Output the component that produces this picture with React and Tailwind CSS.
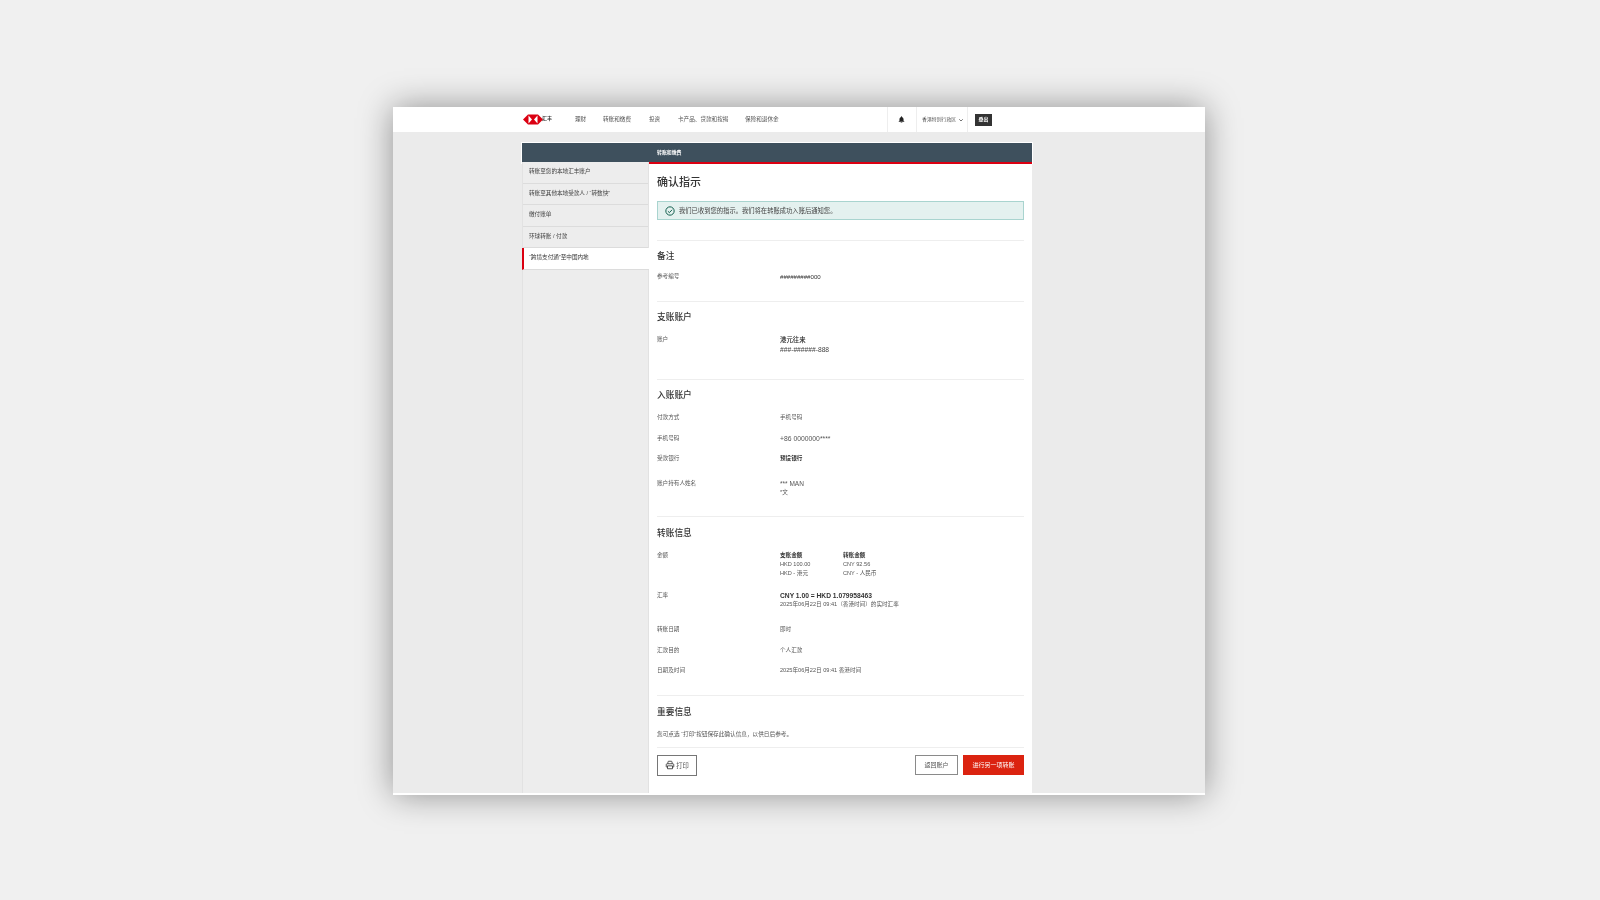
import React from "react";

const font = { fontFamily: '"Liberation Sans","Noto Sans CJK SC",sans-serif' };

function Logo() {
  return (
    <svg width="20" height="11" viewBox="0 0 20 10" className="shrink-0">
      <polygon points="5,0 15,0 20,5 15,10 5,10 0,5" fill="#db0011" />
      <polygon points="5.500,1 5.500,9 9,5" fill="#fff" />
      <polygon points="14.500,1 14.500,9 11,5" fill="#fff" />
    </svg>
  );
}

function Nav({ children, className }) {
  return <span className={`mb-[2px] text-[5.6px] leading-[8px] text-[#555] whitespace-nowrap ${className}`}>{children}</span>;
}

function Side({ children, active }) {
  return active ? (
    <div className="h-[21.5px] pb-[2px] bg-white border-l-2 border-[#db0011] border-b border-b-[#dcdcdc] pl-[5px] flex items-center text-[5.6px] text-[#333] -mr-px -ml-px">{children}</div>
  ) : (
    <div className="h-[21.5px] pb-[2px] border-b border-[#dcdcdc] pl-[6px] flex items-center text-[5.6px] text-[#444]">{children}</div>
  );
}

function Heading({ children, className }) {
  return <h2 className={`text-[8.7px] leading-[12px] font-medium text-[#333] ${className}`}>{children}</h2>;
}

function Divider({ className }) {
  return <div className={`h-px bg-[#eeeeee] ${className}`} />;
}

function Row({ label, children, className }) {
  return (
    <div className={`flex text-[5.6px] leading-[9px] text-[#555] ${className}`}>
      <div className="w-[123px] shrink-0">{label}</div>
      <div>{children}</div>
    </div>
  );
}

export default function App() {
  return (
    <div className="w-[1600px] h-[900px] bg-[#f0f0f0] overflow-hidden pt-[107px] pl-[393px]" style={font}>
      <div className="w-[812px] h-[688px] bg-white shadow-[0_0_32px_rgba(0,0,0,0.4)] blur-[0.4px] flex flex-col">
        <header className="h-[25px] shrink-0 flex items-center pl-[130px] bg-white">
          <Logo />
          <span className="ml-[-1px] mb-[1px] text-[5px] font-bold text-[#333] w-[33px]">汇丰</span>
          <Nav className="w-[28px]">理财</Nav>
          <Nav className="w-[46px]">转账和缴费</Nav>
          <Nav className="w-[29px]">投资</Nav>
          <Nav className="w-[67px]">卡产品、贷款和按揭</Nav>
          <Nav className="w-[142px]">保险和退休金</Nav>
          <div className="w-[30px] h-full border-x border-[#eeeeee] flex items-center justify-center pr-[2px]">
            <svg width="7" height="7" viewBox="0 0 24 24" fill="#222">
              <path d="M12 1a2 2 0 0 1 2 2v1c3.5 1 5 4 5 7v5l3 3v1H2v-1l3-3v-5c0-3 1.500-6 5-7V3a2 2 0 0 1 2-2zM9 22h6a3 3 0 0 1-6 0z" />
            </svg>
          </div>
          <div className="w-[51px] h-full border-r border-[#eeeeee] flex items-center pl-[5px] gap-[2px]">
            <span className="text-[4.9px] text-[#555] whitespace-nowrap">香港特别行政区</span>
            <svg width="6" height="6" viewBox="0 0 24 24" fill="none" stroke="#444" strokeWidth="3">
              <path d="M5 9l7 7 7-7" />
            </svg>
          </div>
          <div className="ml-[7px] w-[17px] h-[12px] bg-[#333] flex items-center justify-center text-[4.9px] font-bold text-white">登出</div>
        </header>

        <div className="flex-1 bg-[#ebebeb] pl-[128px] pt-[10px] border-b-2 border-white">
          <div className="w-[512px] h-full flex flex-col">
            <div className="h-[22px] shrink-0 flex bg-[#3e505d] border-t border-x border-white">
              <div className="w-[126px] shrink-0" />
              <div className="flex-1 flex items-center pl-[9px] border-b-2 border-[#db0011] text-[4.9px] font-bold text-white">转账和缴费</div>
            </div>
            <div className="flex flex-1 min-h-0 mx-px">
              <aside className="w-[127px] shrink-0 -mt-[2px] bg-[#ededed] border-x border-[#e2e2e2]">
                <Side>转账至您的本地汇丰账户</Side>
                <Side>转账至其他本地受款人 / “转数快”</Side>
                <Side>缴付账单</Side>
                <Side>环球转账 / 付款</Side>
                <Side active>“跨境支付通”至中国内地</Side>
              </aside>
              <main className="flex-1 bg-white px-[8px] flex flex-col">
                <h1 className="mt-[10px] text-[11px] leading-[16px] font-medium text-[#333]">确认指示</h1>
                <div className="mt-[11px] h-[19px] bg-[#e4f1ef] border border-[#a9d4cf] flex items-center pl-[7px] gap-[4px] text-[6.3px] text-[#444]">
                  <svg width="10" height="10" viewBox="0 0 24 24" fill="none" stroke="#14604f" strokeWidth="2.400">
                    <circle cx="12" cy="12" r="10" />
                    <path d="M7 12.500l3.500 3.500L17 9" />
                  </svg>
                  <span>我们已收到您的指示。我们将在转账成功入账后通知您。</span>
                </div>
                <Divider className="mt-[20px]" />
                <Heading className="mt-[9px]">备注</Heading>
                <Row label="参考编号" className="mt-[10px]"><span className="text-[6.1px] text-[#333]">#########000</span></Row>
                <Divider className="mt-[19px]" />
                <Heading className="mt-[9px]">支账账户</Heading>
                <Row label="账户" className="mt-[12px]">
                  <div className="text-[6.4px] leading-[9.5px] font-medium text-[#222]">港元往来</div>
                  <div className="text-[6.7px] leading-[9.5px] text-[#444]">###-######-888</div>
                </Row>
                <Divider className="mt-[25px]" />
                <Heading className="mt-[9px]">入账账户</Heading>
                <Row label="付款方式" className="mt-[12px]">手机号码</Row>
                <Row label="手机号码" className="mt-[12px]"><span className="text-[6.8px]">+86 0000000****</span></Row>
                <Row label="受款银行" className="mt-[10px]"><span className="font-bold text-[#333]">预设银行</span></Row>
                <Row label="账户持有人姓名" className="mt-[16px]">
                  <div className="text-[6.5px]">*** MAN</div>
                  <div>*文</div>
                </Row>
                <Divider className="mt-[19px]" />
                <Heading className="mt-[10px]">转账信息</Heading>
                <Row label="金额" className="mt-[12px]">
                  <div className="flex">
                    <div className="w-[63px]">
                      <div className="font-bold text-[#333]">支账金额</div>
                      <div>HKD 100.00</div>
                      <div>HKD - 港元</div>
                    </div>
                    <div>
                      <div className="font-bold text-[#333]">转账金额</div>
                      <div>CNY 92.56</div>
                      <div>CNY - 人民币</div>
                    </div>
                  </div>
                </Row>
                <Row label="汇率" className="mt-[13px]">
                  <div className="text-[6.7px] font-bold text-[#333]">CNY 1.00 = HKD 1.079958463</div>
                  <div>2025年06月22日 09:41（香港时间）的实时汇率</div>
                </Row>
                <Row label="转账日期" className="mt-[16px]">即时</Row>
                <Row label="汇款目的" className="mt-[12px]">个人汇款</Row>
                <Row label="日期及时间" className="mt-[11px]">2025年06月22日 09:41 香港时间</Row>
                <Divider className="mt-[20px]" />
                <Heading className="mt-[10px]">重要信息</Heading>
                <p className="mt-[12px] text-[5.65px] leading-[9px] text-[#555]">您可点选 “打印”按钮保存此确认信息，以供日后参考。</p>
                <Divider className="mt-[8px]" />
                <div className="mt-[7px] flex items-start">
                  <div className="w-[40px] h-[21px] border border-[#767676] flex items-center justify-center gap-[1px] text-[6.3px] text-[#555]">
                    <svg width="10" height="10" viewBox="0 0 24 24" fill="none" stroke="#333" strokeWidth="2" className="-mt-[2px]">
                      <path d="M7 9V5a2 2 0 0 1 2-2h6a2 2 0 0 1 2 2v4M6 17H4a1 1 0 0 1-1-1v-5a2 2 0 0 1 2-2h14a2 2 0 0 1 2 2v5a1 1 0 0 1-1 1h-2M6 14h12v7H6z" />
                    </svg>
                    打印
                  </div>
                  <div className="ml-auto w-[43px] h-[20px] border border-[#8a8a8a] flex items-center justify-center text-[6px] text-[#555]">返回账户</div>
                  <div className="ml-[5px] w-[61px] h-[20px] bg-[#db2310] flex items-center justify-center text-[6px] text-white">进行另一项转账</div>
                </div>
              </main>
            </div>
          </div>
        </div>
      </div>
    </div>
  );
}
